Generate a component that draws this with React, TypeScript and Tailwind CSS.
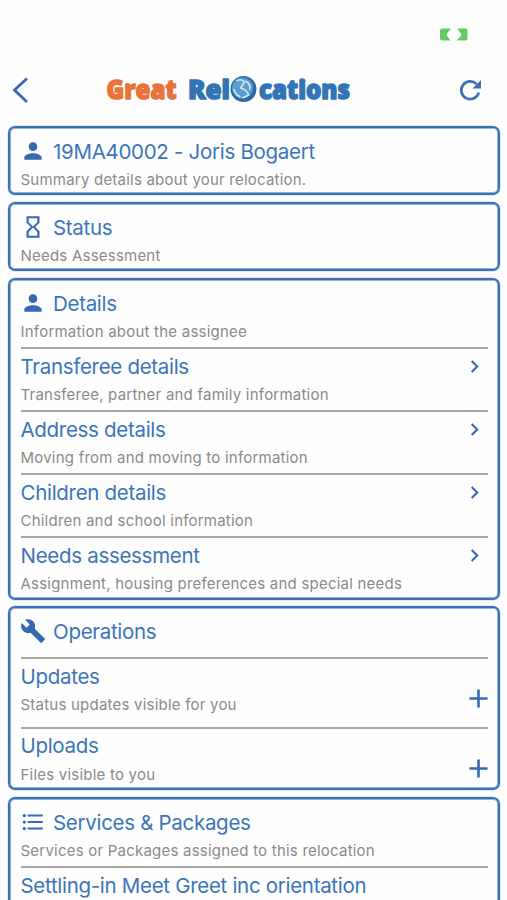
import React from 'react';
import type { IconType } from 'react-icons';
import { MdAdd, MdBuild, MdChevronRight, MdFormatListBulleted, MdHourglassEmpty, MdPerson } from 'react-icons/md';

interface CardProps {
    icon: IconType;
    title: string;
    subtitle?: string;
    className: string;
    children?: React.ReactNode;
}

interface RowProps {
    title: string;
    subtitle?: string;
    action?: 'open' | 'add';
    className?: string;
}

function Card({ icon: Icon, title, subtitle, className, children }: CardProps) {
    return (
        <section
            className={`shrink-0 rounded-[7px] border-2 border-[#3b70b4] px-[10.5px] shadow-[0_0_0_0.5px_#b9d3ee,inset_0_0_0_1px_#8fb2da] ${className}`}
        >
            <div className="mt-[9.5px] flex h-[28px] items-center gap-[7px]">
                <Icon className="-ml-[0.5px] -mt-[0.5px] h-[26px] w-[26px] shrink-0 text-[#3468b0]" />
                <h2 className="pt-[1.5px] text-[20.5px] tracking-[-0.3px] text-[#3c74ba]">{title}</h2>
            </div>
            {subtitle && <p className="h-[29.5px] pt-[1.5px] text-[15px] leading-[26px] tracking-[0.22px] text-[#8a8a8a]">{subtitle}</p>}
            {children}
        </section>
    );
}

function Row({ title, subtitle, action, className = 'h-[63px]' }: RowProps) {
    return (
        <div className={`relative border-t-2 border-[#a6a6a6] pt-[4px] ${className}`}>
            <div className="flex h-[28px] items-center justify-between">
                <h3 className="text-[20.5px] tracking-[-0.3px] text-[#3c74ba]">{title}</h3>
                {action === 'open' && <MdChevronRight className="-mt-[2px] mr-[1px] h-[25px] w-[25px] text-[#3468b0]" />}
            </div>
            {subtitle && <p className="pt-[1px] text-[15px] leading-[26px] tracking-[0.22px] text-[#8a8a8a]">{subtitle}</p>}
            {action === 'add' && <MdAdd className="absolute right-[-6px] top-[24px] h-[31px] w-[31px] text-[#3468b0]" />}
        </div>
    );
}

function Logo() {
    return (
        <svg
            width="264"
            height="48"
            viewBox="-2 -8 264 48"
            className="overflow-visible font-['Open_Sans',sans-serif] text-[27px] font-extrabold"
            strokeWidth="1.5"
            strokeLinejoin="round"
        >
            <circle cx="141.5" cy="16" r="13" fill="#2c69a5" />
            <circle cx="140.5" cy="15" r="10.5" fill="#5a9dcc" />
            <path
                d="M134.5 8Q139.5 5 142.5 9L138.5 15Q145.5 17 146.5 22L140.5 25M143.5 8Q149.5 12 147.5 17M131.5 16Q133.5 22 138.5 24"
                fill="none"
                stroke="#d3e9f5"
                strokeWidth="1.6"
            />
            <g fill="#e8743b" stroke="#e8743b">
                <text x="4.5" y="26" textLength="70" lengthAdjust="spacingAndGlyphs">Great</text>
            </g>
            <g fill="#3274b5" stroke="#3274b5">
                <text x="86" y="26" textLength="42" lengthAdjust="spacingAndGlyphs">Rel</text>
                <text x="157" y="26" textLength="91" lengthAdjust="spacingAndGlyphs">cations</text>
            </g>
        </svg>
    );
}

export default function App() {
    return (
        <div className="flex h-[900px] w-[507px] flex-col overflow-hidden bg-[#fefefe] font-['Inter',sans-serif]">
            <div className="flex h-[58px] shrink-0 justify-end pr-[39px] pt-[28px]">
                <svg width="28" height="13" viewBox="0 0 28 13" fill="#62cc62">
                    <path d="M2 .5H11L7 5.5Q6 7 7.5 8.5L10.5 12.5H2Q0 12.5 0 10.5V2.5Q0 .5 2 .5Z" />
                    <path d="M17 .5H25.5Q27.5 .5 27.5 2.5V10.5Q27.5 12.5 25.5 12.5H16.5L20.5 8.5Q22 7 21 5.5Z" />
                </svg>
            </div>
            <header className="flex h-[68px] shrink-0 items-start pl-[12px] pr-[25px] pt-[7px]">
                <svg width="17" height="28" viewBox="0 0 17 28" className="mt-[11px]" fill="none" stroke="#3468b0" strokeWidth="2.8">
                    <path d="M15 2.5L2.5 14L15 26" />
                </svg>
                <div className="ml-[71px]">
                    <Logo />
                </div>
                <svg width="24" height="24" viewBox="0 0 24 24" className="ml-auto mt-[13px]">
                    <path d="M20.8 14.5A8.9 8.9 0 1 1 18.5 6" fill="none" stroke="#3b70b4" strokeWidth="2.7" />
                    <path d="M23 2V10.6H14.4Z" fill="#3b70b4" />
                </svg>
            </header>
            <main className="flex flex-col pl-[8px] pr-[7px]">
                <Card icon={MdPerson} title="19MA40002 - Joris Bogaert" subtitle="Summary details about your relocation." className="mb-[7px] h-[69px]" />
                <Card icon={MdHourglassEmpty} title="Status" subtitle="Needs Assessment" className="mb-[7px] h-[69px]" />
                <Card icon={MdPerson} title="Details" subtitle="Information about the assignee" className="mb-[6px] h-[322px]">
                    <Row title="Transferee details" subtitle="Transferee, partner and family information" action="open" />
                    <Row title="Address details" subtitle="Moving from and moving to information" action="open" />
                    <Row title="Children details" subtitle="Children and school information" action="open" />
                    <Row title="Needs assessment" subtitle="Assignment, housing preferences and special needs" action="open" />
                </Card>
                <Card icon={MdBuild} title="Operations" className="mb-[7px] h-[184px]">
                    <div className="h-[11.5px]" />
                    <Row title="Updates" subtitle="Status updates visible for you" action="add" className="h-[69.7px]" />
                    <Row title="Uploads" subtitle="Files visible to you" action="add" />
                </Card>
                <Card
                    icon={MdFormatListBulleted}
                    title="Services & Packages"
                    subtitle="Services or Packages assigned to this relocation"
                    className="h-[180px]"
                >
                    <Row title="Settling-in Meet Greet inc orientation" />
                </Card>
            </main>
        </div>
    );
}
